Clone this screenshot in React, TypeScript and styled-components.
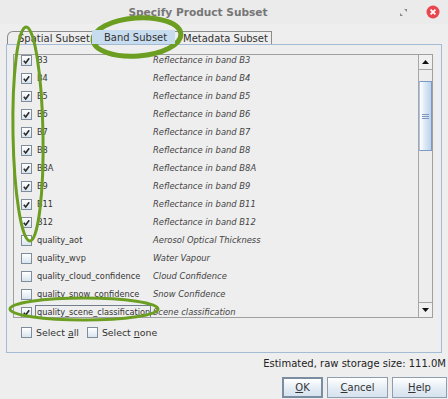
import styled, { createGlobalStyle } from "styled-components";

const GlobalStyle = createGlobalStyle`
  html, body {
    margin: 0;
    padding: 0;
    background: #eeeeee;
  }
  body {
    font-family: "DejaVu Sans", "Liberation Sans", sans-serif;
    font-size: 10px;
    color: #333333;
  }
`;

type Band = {
  name: string;
  description: string;
  checked: boolean;
  focused?: boolean;
};

const bands: Band[] = [
  { name: "B3", description: "Reflectance in band B3", checked: true },
  { name: "B4", description: "Reflectance in band B4", checked: true },
  { name: "B5", description: "Reflectance in band B5", checked: true },
  { name: "B6", description: "Reflectance in band B6", checked: true },
  { name: "B7", description: "Reflectance in band B7", checked: true },
  { name: "B8", description: "Reflectance in band B8", checked: true },
  { name: "B8A", description: "Reflectance in band B8A", checked: true },
  { name: "B9", description: "Reflectance in band B9", checked: true },
  { name: "B11", description: "Reflectance in band B11", checked: true },
  { name: "B12", description: "Reflectance in band B12", checked: true },
  { name: "quality_aot", description: "Aerosol Optical Thickness", checked: false },
  { name: "quality_wvp", description: "Water Vapour", checked: false },
  { name: "quality_cloud_confidence", description: "Cloud Confidence", checked: false },
  { name: "quality_snow_confidence", description: "Snow Confidence", checked: false },
  {
    name: "quality_scene_classification",
    description: "Scene classification",
    checked: true,
    focused: true,
  },
];

const CheckBox = ({ checked }: { checked: boolean }) => (
  <Box>
    {checked && (
      <svg width="9" height="9" viewBox="0 0 9 9">
        <path d="M1.8 4.8 L3.7 7 L7.2 2.2" fill="none" stroke="#2b2b2b" strokeWidth="1.6" />
      </svg>
    )}
  </Box>
);

const App = () => {
  return (
    <>
      <GlobalStyle />
      <Window>
        <TitleBar>
          <Title>Specify Product Subset</Title>
          <TitleControls>
            <svg width="7" height="7" viewBox="0 0 7 7">
              <path d="M4 0 H7 V3 Z M0 4 V7 H3 Z" fill="#8a8a8a" />
            </svg>
            <svg width="14" height="14" viewBox="0 0 14 14">
              <circle cx="7" cy="7" r="6.5" fill="#e9464e" />
              <path d="M4.6 4.6 L9.4 9.4 M9.4 4.6 L4.6 9.4" stroke="#ffffff" strokeWidth="1.8" />
            </svg>
          </TitleControls>
        </TitleBar>

        <TabStrip>
          <Tab $first $padLeft={10} $width={86}>Spatial Subset</Tab>
          <Tab $selected $padLeft={11} $width={83}>Band Subset</Tab>
          <Tab $padLeft={8} $width={98}>Metadata Subset</Tab>
        </TabStrip>

        <Panel>
          <ListBox>
            <Viewport>
              <Rows>
                {bands.map((band) => (
                  <Row key={band.name}>
                    <CheckBox checked={band.checked} />
                    <NameCell $focused={band.focused}>{band.name}</NameCell>
                    <DescCell>{band.description}</DescCell>
                  </Row>
                ))}
              </Rows>
            </Viewport>
            <ScrollBar>
              <ArrowButton>
                <svg width="7" height="4" viewBox="0 0 7 4">
                  <path d="M0 4 L3.5 0 L7 4 Z" fill="#111" />
                </svg>
              </ArrowButton>
              <Track>
                <Thumb>
                  <Grip />
                  <Grip />
                  <Grip />
                </Thumb>
              </Track>
              <ArrowButton $down>
                <svg width="7" height="4" viewBox="0 0 7 4">
                  <path d="M0 0 L7 0 L3.5 4 Z" fill="#111" />
                </svg>
              </ArrowButton>
            </ScrollBar>
          </ListBox>

          <SelectRow>
            <SelectOption>
              <CheckBox checked={false} />
              <span>
                Select <u>a</u>ll
              </span>
            </SelectOption>
            <SelectOption>
              <CheckBox checked={false} />
              <span>
                Select <u>n</u>one
              </span>
            </SelectOption>
          </SelectRow>
        </Panel>

        <Footer>
          <Estimate>Estimated, raw storage size: 111.0M</Estimate>
          <ButtonRow>
            <DialogButton $default $width={41}>
              <u>O</u>K
            </DialogButton>
            <DialogButton $width={61}>
              <u>C</u>ancel
            </DialogButton>
            <DialogButton $width={55}>
              <u>H</u>elp
            </DialogButton>
          </ButtonRow>
        </Footer>

        <Annotations width="448" height="399" viewBox="0 0 448 399">
          <ellipse cx="28" cy="134" rx="15" ry="107" transform="rotate(-1 28 134)" />
          <ellipse cx="137" cy="37" rx="44" ry="19" strokeWidth="5" transform="rotate(-4 137 37)" />
          <ellipse cx="84" cy="309" rx="74" ry="11" />
        </Annotations>
      </Window>
    </>
  );
};

export default App;

const Window = styled.div`
  position: relative;
  width: 448px;
  height: 399px;
  overflow: hidden;
  background: #eeeeee;
`;

const TitleBar = styled.div`
  height: 24px;
  display: flex;
  align-items: center;
  justify-content: center;
  padding-right: 52px;
  background: #ebebeb;
`;

const Title = styled.div`
  font-size: 10.6px;
  font-weight: bold;
  color: #767676;
`;

const TitleControls = styled.div`
  position: absolute;
  top: 5px;
  right: 8px;
  display: flex;
  align-items: center;
  gap: 19px;
`;

const TabStrip = styled.div`
  display: flex;
  padding: 7px 0 0 7px;
  height: 13px;
`;

const Tab = styled.div<{ $selected?: boolean; $first?: boolean; $padLeft: number; $width: number }>`
  box-sizing: border-box;
  width: ${(p) => p.$width}px;
  height: ${(p) => (p.$selected ? 14 : 13)}px;
  margin-top: ${(p) => (p.$selected ? -1 : 0)}px;
  padding-left: ${(p) => p.$padLeft}px;
  display: flex;
  align-items: center;
  border: 1px solid #8b8b8b;
  border-bottom: none;
  margin-right: -1px;
  border-top-left-radius: ${(p) => (p.$first ? 6 : 0)}px;
  background: ${(p) => (p.$selected ? "#c8dcf0" : "#eeeeee")};
  border-color: ${(p) => (p.$selected ? "#c8dcf0" : "#8b8b8b")};
  color: #333333;
  position: relative;
  z-index: ${(p) => (p.$selected ? 1 : 0)};
`;

const Panel = styled.div`
  box-sizing: border-box;
  margin: 0 6px;
  height: 309px;
  border: 1px solid #a3bbd5;
  padding: 9px 8px 0 6px;
`;

const ListBox = styled.div`
  box-sizing: border-box;
  height: 264px;
  display: flex;
  border: 1px solid #a0a0a0;
  background: #eeeeee;
`;

const Viewport = styled.div`
  flex: 1;
  overflow: hidden;
`;

const Rows = styled.div`
  margin-top: -4px;
`;

const Row = styled.div`
  height: 18px;
  display: flex;
  align-items: center;
  padding-left: 7px;
`;

const Box = styled.span`
  box-sizing: border-box;
  width: 11px;
  height: 11px;
  flex: none;
  display: flex;
  align-items: center;
  justify-content: center;
  border: 1px solid #7f8d9b;
  background: linear-gradient(#ffffff, #d9e4ef);
`;

const NameCell = styled.div<{ $focused?: boolean }>`
  box-sizing: border-box;
  width: 116px;
  flex: none;
  height: 15px;
  margin-left: 3px;
  padding-left: 1px;
  display: flex;
  align-items: center;
  white-space: nowrap;
  font-size: 8.2px;
  border: 1px solid ${(p) => (p.$focused ? "#6f7f90" : "transparent")};
  color: #333333;
`;

const DescCell = styled.div`
  padding-left: 2px;
  font-size: 8.4px;
  font-style: italic;
  color: #444444;
  white-space: nowrap;
`;

const ScrollBar = styled.div`
  width: 13px;
  display: flex;
  flex-direction: column;
  border-left: 1px solid #a6a6a6;
`;

const ArrowButton = styled.div<{ $down?: boolean }>`
  height: 14px;
  display: flex;
  align-items: center;
  justify-content: center;
  border-bottom: ${(p) => (p.$down ? "none" : "1px solid #a6a6a6")};
  border-top: ${(p) => (p.$down ? "1px solid #a6a6a6" : "none")};
  background: #f0f0f0;
`;

const Track = styled.div`
  flex: 1;
  padding-top: 11px;
  background: #ededed;
`;

const Thumb = styled.div`
  box-sizing: border-box;
  height: 70px;
  display: flex;
  flex-direction: column;
  align-items: center;
  justify-content: center;
  gap: 1px;
  border: 1px solid #7b9bc6;
  border-left-color: #a9c2df;
  background: linear-gradient(to right, #ffffff, #dde9f6 45%, #bdd2ea);
`;

const Grip = styled.div`
  width: 7px;
  height: 1px;
  background: #7d98bf;
`;

const SelectRow = styled.div`
  display: flex;
  gap: 8px;
  padding: 9px 0 0 8px;
  font-size: 9.4px;
`;

const SelectOption = styled.div`
  display: flex;
  align-items: center;
  gap: 4px;
  color: #333333;
`;

const Footer = styled.div`
  display: flex;
  flex-direction: column;
  align-items: flex-end;
  padding: 4px 1px 0 0;
`;

const Estimate = styled.div`
  height: 13px;
  line-height: 13px;
  padding-right: 1px;
  color: #222222;
`;

const ButtonRow = styled.div`
  display: flex;
  gap: 4px;
  margin-top: 7px;
`;

const DialogButton = styled.div<{ $default?: boolean; $width: number }>`
  box-sizing: border-box;
  width: ${(p) => p.$width}px;
  height: 21px;
  display: flex;
  align-items: center;
  justify-content: center;
  border: ${(p) => (p.$default ? "2px solid #7b8da1" : "1px solid #8f9eae")};
  background: linear-gradient(#ffffff, #e2ebf4 60%, #d6e2ee);
  color: #333333;
`;

const Annotations = styled.svg`
  position: absolute;
  left: 0;
  top: 0;
  pointer-events: none;
  fill: none;
  stroke: #6c9e22;
  stroke-width: 3;
`;
